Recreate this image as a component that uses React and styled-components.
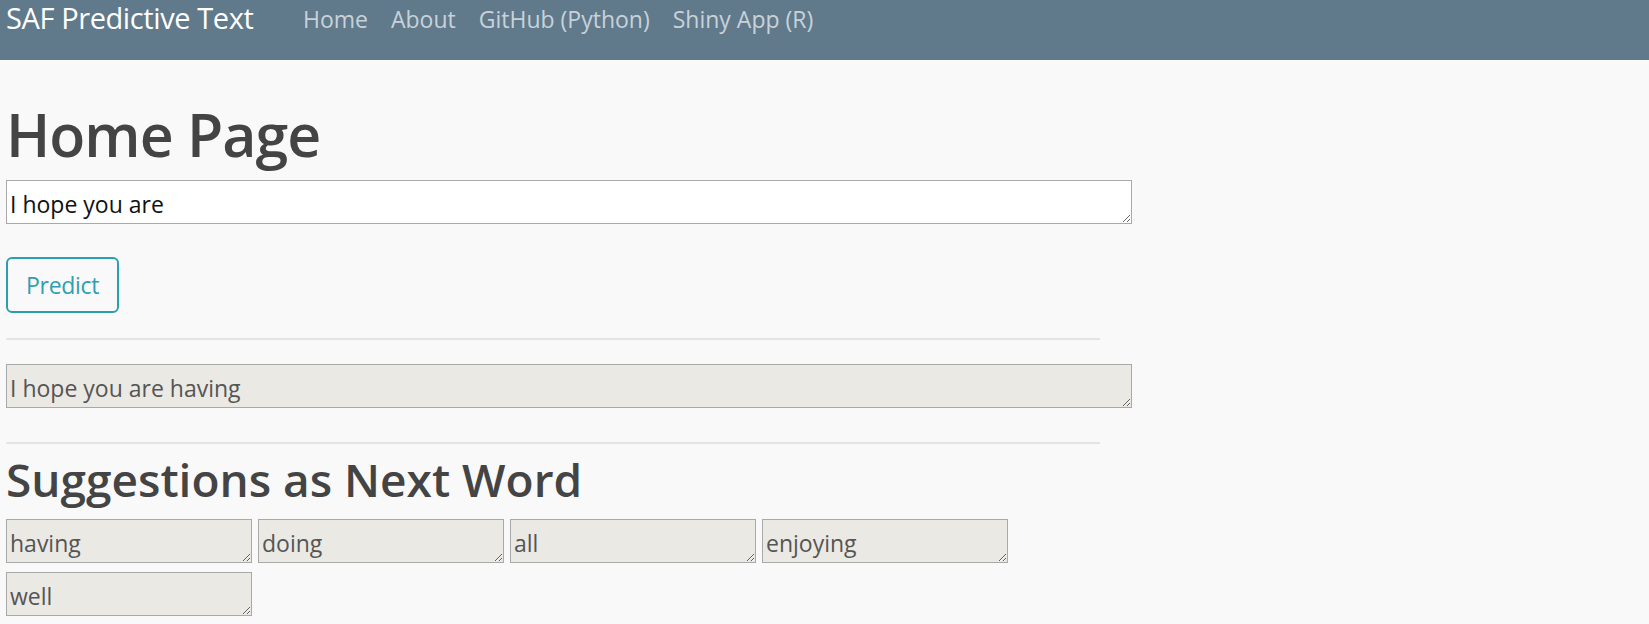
import React from "react";
import styled, { createGlobalStyle } from "styled-components";

const Global = createGlobalStyle`
  html, body {
    margin: 0;
    padding: 0;
    background: #f9f9f9;
    font-family: "Open Sans", "Noto Sans", sans-serif;
  }
`;

const Navbar = styled.nav`
  height: 60px;
  background: #607a8c;
  display: flex;
  align-items: flex-start;
`;

const Brand = styled.a`
  display: block;
  padding-left: 6px;
  margin-right: 38px;
  font-size: 29px;
  line-height: 1.2;
  letter-spacing: -0.4px;
  color: #ffffff;
  text-decoration: none;
  margin-top: 1px;
`;

const NavList = styled.ul`
  display: flex;
  list-style: none;
  margin: 6px 0 0;
  padding: 0;
`;

const NavLink = styled.a`
  display: block;
  padding: 0 11.5px;
  font-size: 23px;
  line-height: 1.2;
  color: #c8d2d9;
  text-decoration: none;
`;

const Main = styled.main`
  padding: 0 6px;
  width: 1094px;
`;

const Title = styled.h1`
  margin: 39px 0 10px;
  font-size: 59px;
  font-weight: 600;
  line-height: 1.2;
  color: #444444;
  letter-spacing: -1px;
`;

const Subtitle = styled.h2`
  margin: 8px 0 12px;
  font-size: 46px;
  font-weight: 600;
  line-height: 1.2;
  color: #444444;
`;

const TextBox = styled.textarea`
  display: block;
  box-sizing: border-box;
  width: ${(p) => p.$width || "1126px"};
  height: 44px;
  margin: 0;
  padding: 8px 3px 4px;
  font-family: "Open Sans", "Noto Sans", sans-serif;
  font-size: 23px;
  line-height: 30px;
  color: ${(p) => (p.$readonly ? "#555555" : "#111111")};
  background: ${(p) => (p.$readonly ? "#ebe9e4" : "#ffffff")};
  border: 1px solid #a9a9a9;
  border-radius: 0;
  overflow: hidden;
  outline: none;
`;

const PredictButton = styled.button`
  display: block;
  box-sizing: border-box;
  height: 56px;
  margin: 33px 0 0;
  padding: 0 18px;
  font-family: "Open Sans", "Noto Sans", sans-serif;
  font-size: 23px;
  letter-spacing: -0.3px;
  color: #2f9fb1;
  background: transparent;
  border: 2px solid #2a9fb0;
  border-radius: 6px;
  cursor: pointer;
`;

const Rule = styled.hr`
  margin: ${(p) => p.$margin};
  border: 0;
  border-top: 2px solid #e4e4e4;
  width: 1094px;
`;

const Suggestions = styled.div`
  display: flex;
  flex-wrap: wrap;
  gap: 9px 6px;
  width: 1094px;
`;

const suggestions = ["having", "doing", "all", "enjoying", "well"];

export default function App() {
  return (
    <>
      <Global />
      <Navbar>
        <Brand href="#">SAF Predictive Text</Brand>
        <NavList>
          <li><NavLink href="#">Home</NavLink></li>
          <li><NavLink href="#">About</NavLink></li>
          <li><NavLink href="#">GitHub (Python)</NavLink></li>
          <li><NavLink href="#">Shiny App (R)</NavLink></li>
        </NavList>
      </Navbar>
      <Main>
        <Title>Home Page</Title>
        <TextBox defaultValue="I hope you are" />
        <PredictButton type="button">Predict</PredictButton>
        <Rule $margin="25px 0 24px" />
        <TextBox $readonly readOnly value="I hope you are having" />
        <Rule $margin="34px 0 0" />
        <Subtitle>Suggestions as Next Word</Subtitle>
        <Suggestions>
          {suggestions.map((w) => (
            <TextBox key={w} $readonly $width="246px" readOnly value={w} />
          ))}
        </Suggestions>
      </Main>
    </>
  );
}
